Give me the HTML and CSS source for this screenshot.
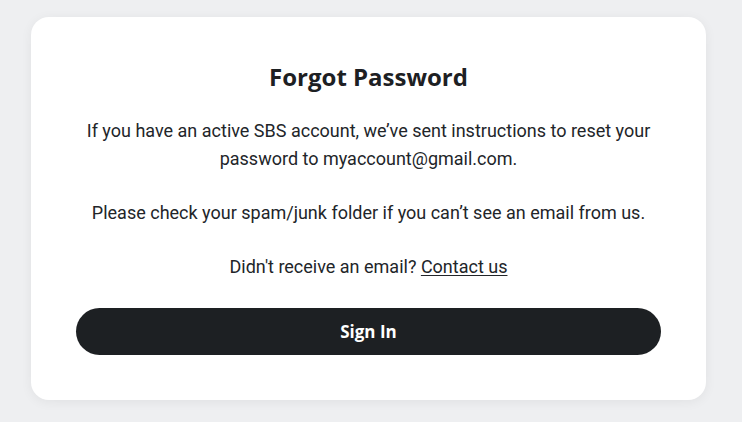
FILE: index.html
```html
<!DOCTYPE html>
<html>
<head>
<meta charset="utf-8">
<link rel="stylesheet" href="styles.css">
</head>
<body>
<main class="page">
  <section class="card">
    <h1 class="title">Forgot Password</h1>
    <p class="text">If you have an active SBS account, we’ve sent instructions to reset your password to myaccount@gmail.com.</p>
    <p class="text">Please check your spam/junk folder if you can’t see an email from us.</p>
    <p class="text">Didn't receive an email? <a class="link" href="#">Contact us</a></p>
    <button class="btn" type="button">Sign In</button>
  </section>
</main>
</body>
</html>
```
FILE: styles.css
```css
html, body {
  margin: 0;
  padding: 0;
  background: #eeeff1;
}
.page {
  padding: 17px 36px 22px 31px;
}
.card {
  width: 675px;
  height: 383px;
  box-sizing: border-box;
  background: #ffffff;
  border-radius: 18px;
  box-shadow: 0 2px 12px rgba(0, 0, 0, 0.06);
  padding: 45px 45px;
  display: flex;
  flex-direction: column;
  align-items: stretch;
  text-align: center;
}
.title {
  margin: 0;
  font-family: "Open Sans", sans-serif;
  font-weight: 700;
  font-size: 24px;
  line-height: 30px;
  color: #1d2023;
}
.text {
  margin: 25px 0 0;
  font-family: Roboto, sans-serif;
  font-size: 18px;
  line-height: 28px;
  color: #222529;
}
.text + .text {
  margin-top: 26px;
}
.link {
  color: #222529;
  text-decoration: underline;
  text-underline-offset: 2px;
}
.btn {
  margin-top: 27px;
  height: 47px;
  border: 0;
  border-radius: 24px;
  background: #1d2023;
  color: #ffffff;
  font-family: "Open Sans", sans-serif;
  font-weight: 700;
  font-size: 17px;
  cursor: pointer;
}
```
